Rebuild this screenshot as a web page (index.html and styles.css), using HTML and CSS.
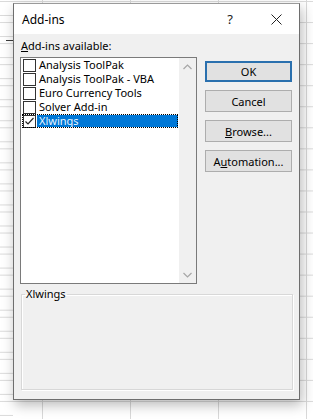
FILE: index.html
```html
<!DOCTYPE html>
<html lang="en">
<head>
  <meta charset="UTF-8">
  <meta name="viewport" content="width=device-width, initial-scale=1.0">
  <title>Add-ins</title>
  <link rel="stylesheet" href="styles.css">
</head>
<body>
  <div class="dialog">
    <div class="titlebar">
      <span class="title">Add-ins</span>
      <span class="caption-btn help">?</span>
      <span class="caption-btn close">
        <svg width="11" height="11" viewBox="0 0 11 11"><path d="M0.5 0.5 L10.5 10.5 M10.5 0.5 L0.5 10.5" stroke="#222" stroke-width="1" fill="none"/></svg>
      </span>
    </div>

    <div class="content">
      <div class="main">
        <div class="left">
          <div class="label"><u>A</u>dd-ins available:</div>
          <div class="listbox">
            <ul class="items">
              <li class="item"><span class="check"></span><span class="name">Analysis ToolPak</span></li>
              <li class="item"><span class="check"></span><span class="name">Analysis ToolPak - VBA</span></li>
              <li class="item"><span class="check"></span><span class="name">Euro Currency Tools</span></li>
              <li class="item"><span class="check"></span><span class="name">Solver Add-in</span></li>
              <li class="item selected">
                <span class="check checked">
                  <svg width="11" height="11" viewBox="0 0 11 11"><path d="M1.5 5.5 L4 8 L9.5 2" stroke="#222" stroke-width="1.2" fill="none"/></svg>
                </span>
                <span class="name">Xlwings</span>
              </li>
            </ul>
            <div class="scrollbar">
              <span class="arrow">
                <svg width="9" height="6" viewBox="0 0 9 6"><path d="M0.5 5 L4.5 1 L8.5 5" stroke="#a6a6a6" stroke-width="1.2" fill="none"/></svg>
              </span>
              <span class="arrow">
                <svg width="9" height="6" viewBox="0 0 9 6"><path d="M0.5 1 L4.5 5 L8.5 1" stroke="#a6a6a6" stroke-width="1.2" fill="none"/></svg>
              </span>
            </div>
          </div>
        </div>

        <div class="buttons">
          <button class="btn default">OK</button>
          <button class="btn">Cancel</button>
          <button class="btn"><u>B</u>rowse...</button>
          <button class="btn">A<u>u</u>tomation...</button>
        </div>
      </div>

      <fieldset class="details">
        <legend>Xlwings</legend>
      </fieldset>
    </div>
  </div>
</body>
</html>
```

FILE: styles.css
```css
html, body {
  margin: 0;
  height: 419px;
  overflow: hidden;
}
body {
  font-family: "Noto Sans", "Open Sans", sans-serif;
  font-size: 11px;
  color: #000;
  background-color: #fff;
  background-image:
    linear-gradient(#3c3c3c, #3c3c3c),
    linear-gradient(to bottom, transparent 20px, #d9d9d9 20px),
    linear-gradient(to bottom, transparent 20px, #d9d9d9 20px),
    linear-gradient(to right, transparent 87px, #d9d9d9 87px);
  background-size: 7px 1px, 13px 21.05px, 100% 21.05px, 88px 100%;
  background-position: 6px 40px, 0 16px, 0 2px, 43px 0;
  background-repeat: no-repeat, repeat-y, repeat, repeat;
  padding-top: 3px;
  box-sizing: border-box;
}
.dialog {
  margin-left: 13px;
  width: 287px;
  height: 397px;
  box-sizing: border-box;
  border: 1px solid #6e6e6e;
  border-top-color: #9a9a9a;
  background: #f0f0f0;
  box-shadow: 2px 5px 12px rgba(0, 0, 0, 0.28);
  display: flex;
  flex-direction: column;
}
.titlebar {
  height: 30px;
  background: #fff;
  display: flex;
  align-items: center;
}
.title {
  flex: 1;
  padding-left: 8px;
  font-size: 12px;
}
.caption-btn {
  width: 46px;
  height: 30px;
  display: flex;
  align-items: center;
  justify-content: center;
}
.help {
  font-size: 13px;
  color: #222;
}
.content {
  padding: 4px 7px 0 6px;
}
.main {
  display: flex;
  gap: 8px;
}
.label {
  line-height: 16px;
  padding-left: 1px;
  margin-bottom: 3px;
}
.listbox {
  width: 177px;
  height: 227px;
  box-sizing: border-box;
  border: 1px solid #7a7a7a;
  background: #fff;
  display: flex;
}
.items {
  list-style: none;
  margin: 0;
  padding: 0;
  flex: 1;
}
.item {
  height: 14px;
  margin: 0 1px;
  padding-left: 1px;
  display: flex;
  align-items: center;
  white-space: nowrap;
}
.check {
  width: 13px;
  height: 13px;
  box-sizing: border-box;
  border: 1px solid #333;
  background: #fff;
  display: flex;
  align-items: center;
  justify-content: center;
}
.name {
  flex: 1;
  margin-left: 1px;
  padding-left: 2px;
  height: 100%;
  line-height: 14px;
}
.selected {
  outline: 1px dotted #000;
  outline-offset: -1px;
}
.selected .name {
  background: #0078d7;
  color: #eaf6ff;
  height: 12px;
  line-height: 12px;
}
.scrollbar {
  width: 17px;
  background: #f0f0f0;
  display: flex;
  flex-direction: column;
  justify-content: space-between;
}
.arrow {
  height: 17px;
  display: flex;
  align-items: center;
  justify-content: center;
}
.buttons {
  padding-top: 23px;
  display: flex;
  flex-direction: column;
  gap: 8px;
}
.btn {
  width: 87px;
  height: 22px;
  padding: 0;
  font-family: inherit;
  font-size: 11px;
  color: #000;
  background: #e1e1e1;
  border: 1px solid #adadad;
}
.btn.default {
  border: 2px solid #2a70ae;
  height: 21px;
}
.details {
  margin: 3px 0 0 1px;
  width: 272px;
  height: 103px;
  box-sizing: border-box;
  padding: 0 3px;
  border: 1px solid #d8d8d8;
  box-shadow: inset 1px 1px 0 #fff, 1px 1px 0 #fff;
}
.details legend {
  padding: 0 1px;
  line-height: 14px;
}
```
